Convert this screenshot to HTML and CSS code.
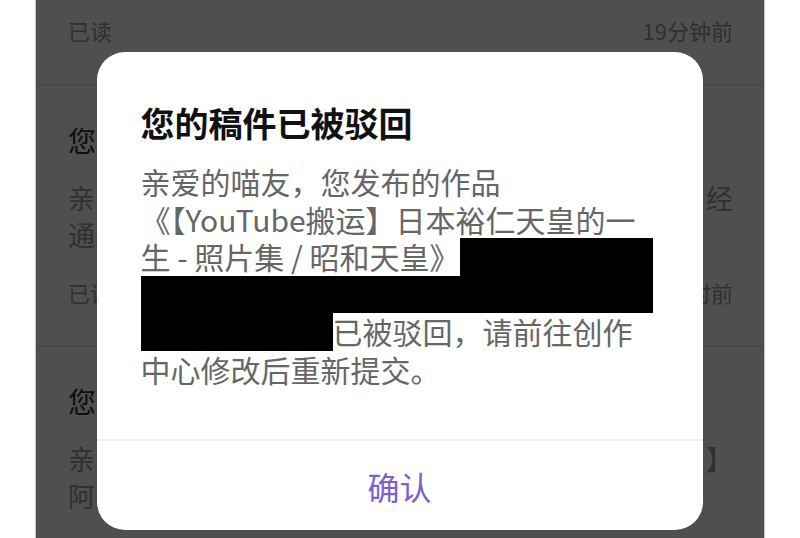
FILE: index.html
```html
<!DOCTYPE html>
<html lang="zh-CN">
<head>
<meta charset="utf-8">
<title>消息通知</title>
<link rel="stylesheet" href="styles.css">
</head>
<body>
<div class="phone">
  <div class="list">
    <div class="item item-partial">
      <div class="meta"><span>已读</span><span>19分钟前</span></div>
    </div>
    <div class="item">
      <div class="item-title">您的稿件已通过审核</div>
      <div class="item-body">
        <div class="bl bl-full">亲爱的喵友，您发布的作品《YouTube搬运》已经</div>
        <div class="bl">通过审核，快去看看吧～</div>
      </div>
      <div class="meta"><span>已读</span><span>1小时前</span></div>
    </div>
    <div class="item">
      <div class="item-title">您的稿件已被驳回</div>
      <div class="item-body">
        <div class="bl bl-full">亲爱的喵友，您发布的作品【YouTube搬运】</div>
        <div class="bl">阿婆主请前往创作中心查看</div>
      </div>
    </div>
  </div>

  <div class="mask">
    <div class="dialog">
      <div class="dialog-main">
        <h2 class="dialog-title">您的稿件已被驳回</h2>
        <div class="dialog-text">
          <div class="ln">亲爱的喵友，您发布的作品</div>
          <div class="ln">《【YouTube搬运】日本裕仁天皇的一</div>
          <div class="ln"><span>生 - 照片集 / 昭和天皇》</span><span class="redact redact-fill"></span></div>
          <div class="ln"><span class="redact redact-fill"></span></div>
          <div class="ln"><span class="redact redact-lead"></span><span>已被驳回，请前往创作</span></div>
          <div class="ln">中心修改后重新提交。</div>
        </div>
      </div>
      <div class="dialog-actions">
        <button class="btn-confirm">确认</button>
      </div>
    </div>
  </div>
</div>
</body>
</html>
```

FILE: styles.css
```css
* { box-sizing: border-box; }

html, body {
  margin: 0;
  padding: 0;
  background: #ffffff;
}

body {
  font-family: "Noto Sans CJK SC", "Noto Sans", sans-serif;
  width: 800px;
  height: 538px;
  overflow: hidden;
}

.phone {
  position: relative;
  margin-left: 35px;
  width: 730px;
  height: 538px;
  border-left: 1px solid #c4c4c4;
  border-right: 1px solid #c4c4c4;
  background: #ffffff;
  overflow: hidden;
}

/* underlying message list */
.list {
  display: flex;
  flex-direction: column;
}

.item {
  padding: 34px 31px 38px 32px;
  border-bottom: 2px solid #ececec;
}

.item-partial {
  padding-top: 15px;
  padding-bottom: 39px;
}

.item-title {
  font-size: 28px;
  line-height: 40px;
  color: #333333;
}

.item-body {
  margin-top: 19px;
  font-size: 27px;
  line-height: 37px;
  color: #9a9a9a;
}

.bl {
  white-space: nowrap;
  overflow: hidden;
}

.bl-full {
  text-align: justify;
  text-align-last: justify;
}

.meta {
  display: flex;
  justify-content: space-between;
  font-size: 22px;
  line-height: 30px;
  color: #9a9a9a;
}

.item .meta {
  margin-top: 24px;
}

.item-partial .meta {
  margin-top: 0;
}

/* modal */
.mask {
  position: absolute;
  inset: 0;
  background: rgba(0, 0, 0, 0.69);
  display: flex;
  justify-content: center;
  align-items: flex-start;
  padding-top: 52px;
}

.dialog {
  width: 606px;
  height: 478px;
  background: #ffffff;
  border-radius: 28px;
  display: flex;
  flex-direction: column;
  margin-left: -1px;
}

.dialog-main {
  padding: 49px 50px 0 44px;
  flex: 1;
}

.dialog-title {
  margin: 0;
  font-size: 34px;
  line-height: 44px;
  font-weight: 700;
  color: #111111;
}

.dialog-text {
  margin-top: 18px;
  font-size: 30px;
  line-height: 37.6px;
  color: #666666;
}

.ln {
  display: flex;
  height: 37.6px;
  white-space: nowrap;
}

.redact {
  display: block;
  height: 37.6px;
  background: #000000;
}

.redact-fill {
  flex: 1;
}

.redact-lead {
  width: 192px;
  flex: none;
}

.dialog-actions {
  height: 91px;
  border-top: 2px solid #f1f1f1;
  display: flex;
  align-items: center;
  justify-content: center;
}

.btn-confirm {
  border: 0;
  background: transparent;
  padding: 0;
  font-family: "Noto Sans CJK SC", sans-serif;
  font-size: 32px;
  line-height: 40px;
  color: #7e5fd0;
}
```
